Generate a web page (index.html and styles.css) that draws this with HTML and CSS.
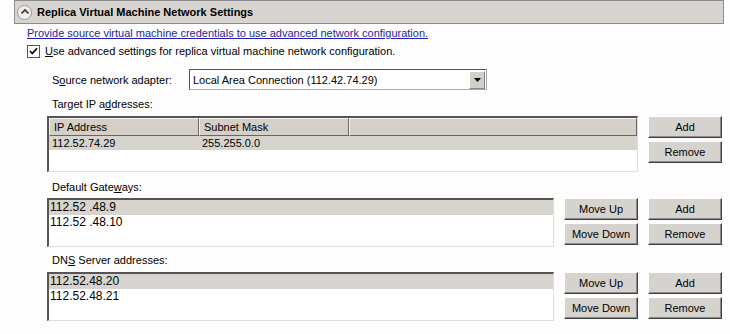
FILE: index.html
```html
<!DOCTYPE html>
<html lang="en">
  <head>
    <meta charset="UTF-8" />
    <title>Replica Virtual Machine Network Settings</title>
    <link rel="stylesheet" href="styles.css">
  </head>
  <body>
    <div class="header">
      <span class="toggle">
        <svg width="10" height="8" viewBox="0 0 10 8">
          <path d="M1.5 5.5 L5 2 L8.5 5.5" fill="none" stroke="#333" stroke-width="1.6" />
        </svg>
      </span>
      <span class="title">Replica Virtual Machine Network Settings</span>
    </div>

    <div class="link-row">
      <a href="#" class="link">Provide source virtual machine credentials to use advanced network configuration.</a>
    </div>

    <div class="check-row">
      <span class="checkbox">
        <svg width="9" height="9" viewBox="0 0 9 9">
          <path d="M1 4 L3.3 6.5 L8 1.3" fill="none" stroke="#000" stroke-width="1.7" />
        </svg>
      </span>
      <span><u>U</u>se advanced settings for replica virtual machine network configuration.</span>
    </div>

    <div class="settings">
      <div class="source-row">
        <span class="label-wide">S<u>o</u>urce network adapter:</span>
        <div class="combo">
          <span class="combo-text">Local Area Connection (112.42.74.29)</span>
          <span class="combo-btn">
            <svg width="7" height="4" viewBox="0 0 7 4"><path d="M0 0 H7 L3.5 4 Z" fill="#000" /></svg>
          </span>
        </div>
      </div>

      <div class="caption first">Target IP a<u>d</u>dresses:</div>
      <div class="grid">
        <div class="table">
          <div class="thead">
            <span class="th c1">IP Address</span>
            <span class="th c2">Subnet Mask</span>
            <span class="th c3"></span>
          </div>
          <div class="trow">
            <span class="td c1">112.52.74.29</span>
            <span class="td c2">255.255.0.0</span>
          </div>
        </div>
        <div class="buttons">
          <button class="btn">Add</button>
          <button class="btn">Remove</button>
        </div>
      </div>

      <div class="caption gw">Default Gate<u>w</u>ays:</div>
      <div class="grid tight">
        <div class="list">
          <div class="item selected">112.52 .48.9</div>
          <div class="item">112.52 .48.10</div>
        </div>
        <div class="buttons">
          <button class="btn">Move Up</button>
          <button class="btn">Move Down</button>
        </div>
        <div class="buttons">
          <button class="btn">Add</button>
          <button class="btn">Remove</button>
        </div>
      </div>

      <div class="caption dns">DN<u>S</u> Server addresses:</div>
      <div class="grid">
        <div class="list">
          <div class="item selected">112.52.48.20</div>
          <div class="item">112.52.48.21</div>
        </div>
        <div class="buttons">
          <button class="btn">Move Up</button>
          <button class="btn">Move Down</button>
        </div>
        <div class="buttons">
          <button class="btn">Add</button>
          <button class="btn">Remove</button>
        </div>
      </div>
    </div>
  </body>
</html>
```

FILE: styles.css
```css
body {
  margin: 0;
  background: #fdfdfd;
  color: #000;
  font-family: "Liberation Sans", Arial, sans-serif;
  font-size: 11px;
  line-height: 14px;
}

u {
  text-decoration: underline;
}

/* collapsible section header */
.header {
  display: flex;
  align-items: center;
  height: 22px;
  margin: 0 6px 0 14px;
  background: #d7d4cf;
  border: 1px solid #8c8c8c;
}

.toggle {
  display: flex;
  align-items: center;
  justify-content: center;
  width: 13px;
  height: 13px;
  margin: 0 5px 0 2px;
  border: 1px solid #9a9a9a;
  border-radius: 50%;
  background: #f0efec;
}

.title {
  font-weight: bold;
  font-size: 11px;
}

.link-row {
  margin-top: 2px;
  padding-left: 27px;
}

.link {
  color: #1f1fa8;
  text-decoration: underline;
}

.check-row {
  display: flex;
  align-items: center;
  margin-top: 4px;
  padding-left: 27px;
}

.checkbox {
  display: flex;
  align-items: center;
  justify-content: center;
  width: 11px;
  height: 11px;
  margin-right: 5px;
  border: 1px solid #555;
  background: #fff;
}

.settings {
  padding-left: 47px;
}

.source-row {
  display: flex;
  align-items: center;
  margin-top: 11px;
}

.label-wide {
  width: 137px;
  padding-left: 5px;
}

.combo {
  display: flex;
  align-items: center;
  width: 296px;
  height: 19px;
  border: 1px solid #aaa;
  border-top-color: #555;
  border-left-color: #555;
  background: #fff;
}

.combo-text {
  flex: 1;
  padding-left: 3px;
}

.combo-btn {
  display: flex;
  align-items: center;
  justify-content: center;
  width: 14px;
  height: 16px;
  margin-right: 1px;
  background: #d4d0c8;
  border: 1px solid #888;
  border-top-color: #fff;
  border-left-color: #fff;
}

.caption {
  padding-left: 5px;
}

.caption.first {
  margin-top: 7px;
}

.caption.gw {
  margin-top: 8px;
}

.caption.dns {
  margin-top: 6px;
}

.grid {
  display: grid;
  grid-template-columns: 507px 74px 74px;
  column-gap: 10px;
  margin-top: 5px;
}

.grid.tight {
  margin-top: 4px;
}

/* target ip table */
.table {
  grid-column: 1 / 3;
  height: 53px;
  background: #fff;
  border: 1px solid #ddd;
  border-top: 2px solid #555;
  border-left: 2px solid #555;
}

.thead {
  display: flex;
  height: 18px;
}

.th {
  display: flex;
  align-items: center;
  padding-left: 4px;
  background: #d4d0c8;
  border-right: 1px solid #666;
  border-bottom: 1px solid #666;
  border-top: 1px solid #f4f3f0;
  border-left: 1px solid #f4f3f0;
  box-sizing: border-box;
}

.c1 {
  width: 150px;
}

.c2 {
  width: 150px;
}

.c3 {
  flex: 1;
}

.trow {
  display: flex;
  height: 14px;
  background: #d7d4cf;
}

.td {
  padding-left: 3px;
  box-sizing: border-box;
}

.buttons {
  display: flex;
  flex-direction: column;
  gap: 3px;
}

.btn {
  height: 22px;
  padding: 0;
  font-family: "Liberation Sans", Arial, sans-serif;
  font-size: 11px;
  color: #000;
  background: #d6d3ce;
  border: 1px solid #404040;
  border-top-color: #fff;
  border-left-color: #fff;
  box-shadow: inset -1px -1px 0 #8a8a8a;
}

/* gateway and dns lists */
.list {
  height: 46px;
  background: #fff;
  border: 1px solid #ddd;
  border-top: 2px solid #555;
  border-left: 2px solid #555;
  font-size: 12px;
}

.item {
  height: 15px;
  line-height: 15px;
  padding-left: 1px;
}

.item.selected {
  background: #d7d4cf;
}
```
